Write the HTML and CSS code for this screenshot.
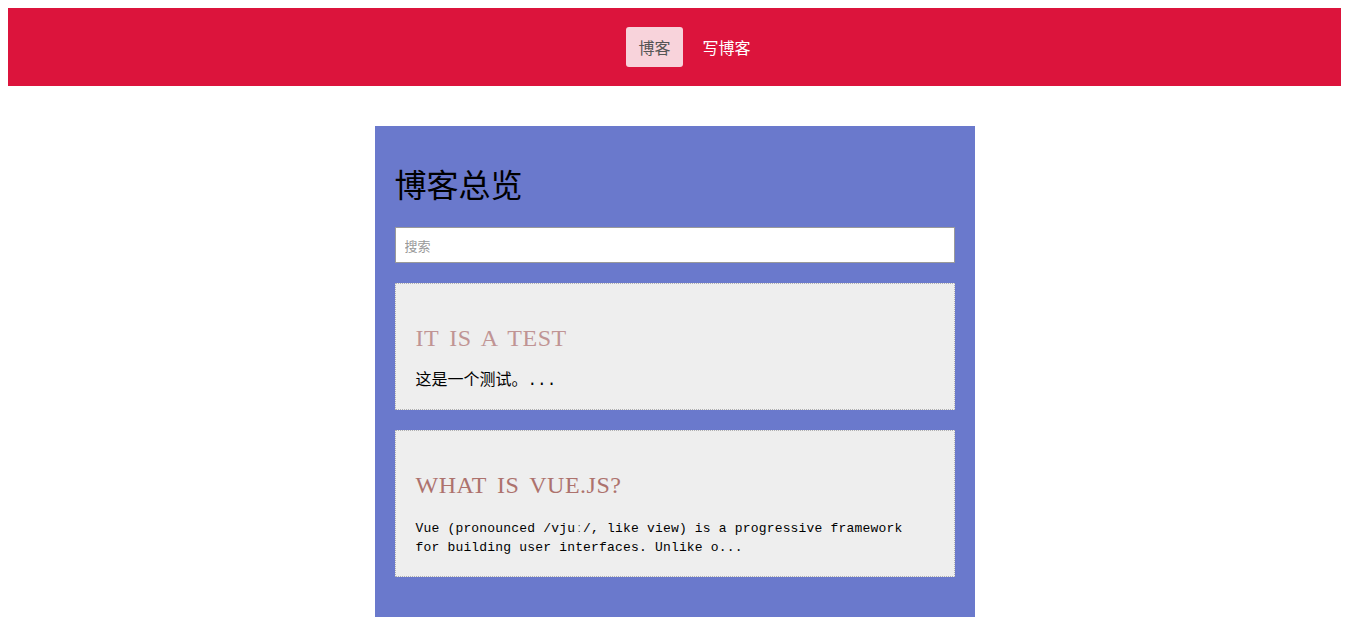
FILE: index.html
```html
<!DOCTYPE html>
<html lang="zh">
<head>
<meta charset="utf-8">
<title>博客</title>
<link rel="stylesheet" href="styles.css">
</head>
<body>
<nav class="nav">
  <a class="nav-item active" href="#">博客</a>
  <a class="nav-item" href="#">写博客</a>
</nav>
<main class="blogs">
  <h1 class="blogs-title">博客总览</h1>
  <input class="search" type="text" placeholder="搜索">
  <article class="post">
    <h2 class="post-title">It is a test</h2>
    <p class="post-body cn">这是一个测试。...</p>
  </article>
  <article class="post">
    <h2 class="post-title dark">What is Vue.js?</h2>
    <p class="post-body en">Vue (pronounced /vjuː/, like view) is a progressive framework for building user interfaces. Unlike o...</p>
  </article>
</main>
</body>
</html>
```
FILE: styles.css
```css
body {
  margin: 8px;
  font-family: "Liberation Serif", "Noto Sans CJK SC", serif;
  background: #fff;
}
.nav {
  height: 78px;
  padding-left: 40px;
  background: #dc143c;
  display: flex;
  justify-content: center;
  align-items: center;
  gap: 8px;
}
.nav-item {
  height: 40px;
  line-height: 40px;
  padding: 0 12px;
  font-family: "Noto Sans CJK SC", sans-serif;
  font-size: 16px;
  color: #fff;
  text-decoration: none;
  border-radius: 3px;
}
.nav-item.active {
  background: #f8d3db;
  color: #555;
}
.blogs {
  width: 560px;
  margin: 40px auto 0;
  padding: 20px 20px 40px;
  background: #6a79cc;
}
.blogs-title {
  font-size: 32px;
  font-weight: normal;
  margin: 21px 0 22px;
  line-height: 38px;
  color: #000;
}
.search {
  display: block;
  box-sizing: border-box;
  width: 100%;
  height: 36px;
  padding: 0 9px;
  border: 1px solid #9a9a9a;
  font-family: "Noto Sans CJK SC", sans-serif;
  font-size: 13px;
  outline: none;
}
.search::placeholder {
  color: #999;
}
.post {
  margin-top: 20px;
  background: #eeeeee;
  border: 1px dotted #b0b0b0;
  padding: 20px 20px 19px;
}
.post-title {
  margin: 20px 0 20px;
  font-size: 24px;
  font-weight: normal;
  line-height: 28px;
  text-transform: uppercase;
  letter-spacing: 0.5px;
  word-spacing: 4px;
  color: #c09494;
}
.post-title.dark {
  color: #ad726d;
}
.post-body {
  margin: 0;
  font-family: "Liberation Mono", "Noto Sans CJK SC", monospace;
  color: #000;
}
.post-body.cn {
  font-size: 16px;
  line-height: 18px;
}
.post-body.en {
  font-size: 13px;
  line-height: 19px;
  letter-spacing: 0.18px;
  padding-right: 20px;
}
```
